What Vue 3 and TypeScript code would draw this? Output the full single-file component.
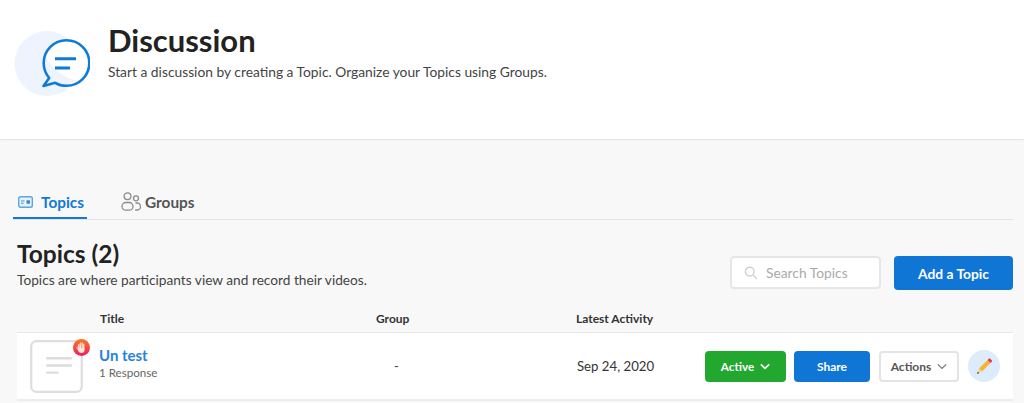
<script setup lang="ts">
interface Topic {
  title: string;
  responses: string;
  group: string;
  activity: string;
}

const topics: Topic[] = [
  { title: "Un test", responses: "1 Response", group: "-", activity: "Sep 24, 2020" },
];
</script>

<template>
  <div class="page">
    <header class="hero">
      <svg class="hero-icon" viewBox="0 0 90 70" width="90" height="70" aria-hidden="true">
        <circle cx="47" cy="33.5" r="32.5" fill="#edf4fe" />
        <path d="M66.500 10.200C53.900 10.200 43.700 20.400 43.700 33c0 5.800 2.100 11 5.500 15L43.500 56l11.700-3.200c3.400 2 7.200 3 11.300 3 12.600 0 22.800-10.200 22.800-22.800S79.100 10.200 66.500 10.200z" fill="#fff" />
        <path d="M44.500 22C48 36 60 46 75 50L60 62 46 50z" fill="#edf4fe" />
        <path d="M66.500 10.200C53.900 10.200 43.700 20.400 43.700 33c0 5.800 2.100 11 5.500 15L43.500 56l11.700-3.200c3.400 2 7.200 3 11.300 3 12.600 0 22.800-10.200 22.800-22.800S79.100 10.200 66.500 10.200z" fill="none" stroke="#0f7bd8" stroke-width="2.600" stroke-linejoin="round" />
        <path d="M55 28.700h21M55 38h15" fill="none" stroke="#0f7bd8" stroke-width="3" />
      </svg>
      <div class="hero-text">
        <h1>Discussion</h1>
        <p>Start a discussion by creating a Topic. Organize your Topics using Groups.</p>
      </div>
    </header>

    <main class="content">
      <nav class="tabs">
        <a class="tab active">
          <svg viewBox="0 0 15 12" width="15" height="12" aria-hidden="true">
            <rect x=".7" y=".7" width="13.600" height="10.600" rx="1.800" fill="#e6f1fc" stroke="#5aa5e8" stroke-width="1.400" />
            <path d="M3 5h3.500M3 7.300h2.500" stroke="#4d8fcf" stroke-width="1.100" />
            <rect x="8.500" y="4.300" width="3.500" height="3.400" rx=".6" fill="#3c86cc" />
          </svg>
          Topics
        </a>
        <a class="tab">
          <svg viewBox="0 0 20 19" width="20" height="19" aria-hidden="true" fill="none" stroke="#8b8b8b" stroke-width="1.300">
            <circle cx="6.500" cy="4.300" r="3.400" />
            <circle cx="15" cy="6.300" r="2.500" />
            <rect x="1" y="10.500" width="11" height="7.700" rx="3.800" />
            <path d="M14.500 11h1.500a3.400 3.400 0 0 1 0 7h-1.800" />
          </svg>
          Groups
        </a>
      </nav>

      <section class="toolbar">
        <div>
          <h2>Topics (2)</h2>
          <p>Topics are where participants view and record their videos.</p>
        </div>
        <div class="toolbar-actions">
          <div class="search">
            <svg viewBox="0 0 16 16" width="14" height="14" aria-hidden="true" fill="none" stroke="#d0d0d0" stroke-width="1.600">
              <circle cx="6.500" cy="6.500" r="5" />
              <path d="M10.300 10.300 15 15" />
            </svg>
            <span>Search Topics</span>
          </div>
          <button class="btn add">Add a Topic</button>
        </div>
      </section>

      <div class="table-head">
        <span class="col-title">Title</span>
        <span class="col-group">Group</span>
        <span class="col-activity">Latest Activity</span>
      </div>

      <div v-for="t in topics" :key="t.title" class="row">
        <div class="thumb">
          <svg viewBox="0 0 52 52" width="53" height="53" aria-hidden="true" fill="none">
            <rect x="1.200" y="1.200" width="49.600" height="49.600" rx="5" stroke="#dedede" stroke-width="2.200" />
            <path d="M16 18h25M16 25h25M16 32h12" stroke="#dcdcdc" stroke-width="2.400" />
          </svg>
          <span class="badge">
            <!-- raised hand -->
            <svg viewBox="0 0 12 12" width="13" height="13" aria-hidden="true" fill="none">
              <path d="M2.800 8.500 1.700 6.300c-.3-.7.600-1.100 1-.5l.9 1.200" stroke="#ffe3cc" stroke-width=".7" />
              <path d="M3.500 8V3.400M5 7V2M6.600 7V1.800M8.100 7.500V3" stroke="#ffe9d6" stroke-width="1.200" stroke-linecap="round" />
              <path d="M3 6.800h5.700v2C8.700 10.200 7.600 11 6 11S3 10.200 3 8.500z" fill="#ffe9d6" />
            </svg>
          </span>
        </div>
        <div class="title-cell">
          <a>{{ t.title }}</a>
          <small>{{ t.responses }}</small>
        </div>
        <div class="group-cell">{{ t.group }}</div>
        <div class="activity-cell">{{ t.activity }}</div>
        <div class="row-actions">
          <button class="btn active-btn">
            Active
            <svg viewBox="0 0 12 8" width="10" height="7" aria-hidden="true" fill="none" stroke="#fff" stroke-width="2"><path d="M1 1.500 6 6.300 11 1.500" /></svg>
          </button>
          <button class="btn share">Share</button>
          <button class="btn actions">
            Actions
            <svg viewBox="0 0 12 8" width="10" height="7" aria-hidden="true" fill="none" stroke="#777" stroke-width="1.500"><path d="M1 1.500 6 6.300 11 1.500" /></svg>
          </button>
          <button class="edit" aria-label="Edit">
            <svg viewBox="0 0 18 18" width="18" height="18" aria-hidden="true">
              <path d="M4 11.500 12.500 3l3 3L7 14.500z" fill="#f5b531" />
              <path d="M12.500 3l1.300-1.300a1 1 0 0 1 1.400 0l1.600 1.600a1 1 0 0 1 0 1.400L15.500 6z" fill="#e8364f" />
              <path d="M4 11.500 2 17l5-2.500z" fill="#f1d3a5" />
              <path d="M2.800 14.800 2 17l2.200-.9z" fill="#333" />
            </svg>
          </button>
        </div>
      </div>
    </main>
  </div>
</template>

<style>
html,
body {
  margin: 0;
  background: #f8f8f8;
}
</style>

<style scoped>
.page {
  font-family: Lato, "Open Sans", sans-serif;
  color: #222;
  height: 403px;
  overflow: hidden;
  background: #f8f8f8;
}

.hero {
  height: 140px;
  box-sizing: border-box;
  background: #fff;
  border-bottom: 1px solid #e6e6e6;
  box-shadow: 0 1px 2px rgba(0, 0, 0, 0.03);
  display: flex;
  align-items: flex-start;
  padding: 30px 0 0 0;
}

.hero-icon {
  flex: none;
  margin-right: 18px;
}

.hero-text h1 {
  margin: -8px 0 0;
  font-size: 31px;
  line-height: 36px;
  font-weight: 700;
  color: #222;
}

.hero-text p {
  margin: 5px 0 0;
  font-size: 13.800px;
  line-height: 18px;
  color: #444;
}

.content {
  padding: 49px 11px 0 17px;
}

.tabs {
  display: flex;
  height: 30px;
  margin-left: -4px;
  border-bottom: 1px solid #e4e4e4;
}

.tab {
  display: flex;
  align-items: center;
  gap: 4px;
  height: 29px;
  box-sizing: border-box;
  padding: 0 3px 4px 0;
  font-size: 15.400px;
  font-weight: 700;
  color: #555;
}

.tab.active {
  color: #1279d6;
  border-bottom: 2px solid #1279d6;
  height: 30px;
  padding: 0 0 2px 5px;
  width: 74px;
  gap: 8px;
  margin-right: 34px;
}

.toolbar {
  display: flex;
  justify-content: space-between;
  margin-top: 20px;
}

.toolbar h2 {
  margin: 0;
  font-size: 24.500px;
  line-height: 28px;
  font-weight: 700;
  color: #222;
}

.toolbar p {
  margin: 3px 0 0;
  font-size: 13.700px;
  line-height: 18px;
  color: #444;
}

.toolbar-actions {
  display: flex;
  gap: 13px;
  margin-top: 16px;
  height: 34px;
}

.search {
  width: 151px;
  height: 33px;
  box-sizing: border-box;
  background: #fff;
  border: 2px solid #e6e6e6;
  border-radius: 4px;
  display: flex;
  align-items: center;
  gap: 8px;
  padding-left: 12px;
  font-size: 13.800px;
  color: #aaa;
}

.btn {
  font-family: inherit;
  border: 0;
  border-radius: 4px;
  cursor: pointer;
  font-weight: 700;
}

.add {
  width: 119px;
  height: 34px;
  background: #0f76d6;
  color: #fff;
  font-size: 13.800px;
}

.table-head {
  display: flex;
  margin-top: 22px;
  height: 20px;
  font-size: 12px;
  font-weight: 700;
  color: #333;
  line-height: 14px;
}

.col-title {
  margin-left: 83px;
  width: 276px;
}

.col-group {
  width: 200px;
}

.row {
  display: flex;
  align-items: center;
  height: 69px;
  background: #fff;
  border-top: 1px solid #e8e8e8;
  border-bottom: 2px solid #ececec;
  padding-left: 13px;
  box-sizing: border-box;
}

.thumb {
  position: relative;
  width: 53px;
  height: 53px;
  margin-right: 16px;
  flex: none;
}

.thumb > svg {
  display: block;
}

.badge {
  position: absolute;
  right: -7px;
  top: -1px;
  width: 17px;
  height: 17px;
  border-radius: 50%;
  background: linear-gradient(180deg, #fa7a1c, #f01a6a);
  display: flex;
  align-items: center;
  justify-content: center;
}

.title-cell {
  width: 295px;
  flex: none;
  display: flex;
  flex-direction: column;
  margin-bottom: 7px;
}

.title-cell a {
  font-size: 15px;
  line-height: 20px;
  font-weight: 700;
  color: #2583dc;
}

.title-cell small {
  font-size: 11.600px;
  line-height: 15px;
  color: #666;
}

.group-cell {
  width: 183px;
  flex: none;
  font-size: 13px;
  color: #444;
}

.activity-cell {
  width: 128px;
  flex: none;
  font-size: 13.200px;
  color: #333;
}

.row-actions {
  display: flex;
  align-items: center;
  gap: 8px;
}

.active-btn,
.share,
.actions {
  height: 31px;
  font-size: 12px;
  display: flex;
  align-items: center;
  justify-content: center;
  gap: 6px;
  padding: 0;
}

.active-btn {
  width: 81px;
  font-size: 11.700px;
  background: #22a82f;
  color: #fff;
}

.share {
  width: 76px;
  background: #0f76d6;
  color: #fff;
}

.actions {
  width: 80px;
  margin-left: 1px;
  background: #fff;
  border: 2px solid #e4e4e4;
  color: #555;
}

.edit {
  width: 32px;
  height: 32px;
  margin-left: 1px;
  border: 0;
  border-radius: 50%;
  background: #dcecfb;
  display: flex;
  align-items: center;
  justify-content: center;
  padding: 0;
}
</style>
